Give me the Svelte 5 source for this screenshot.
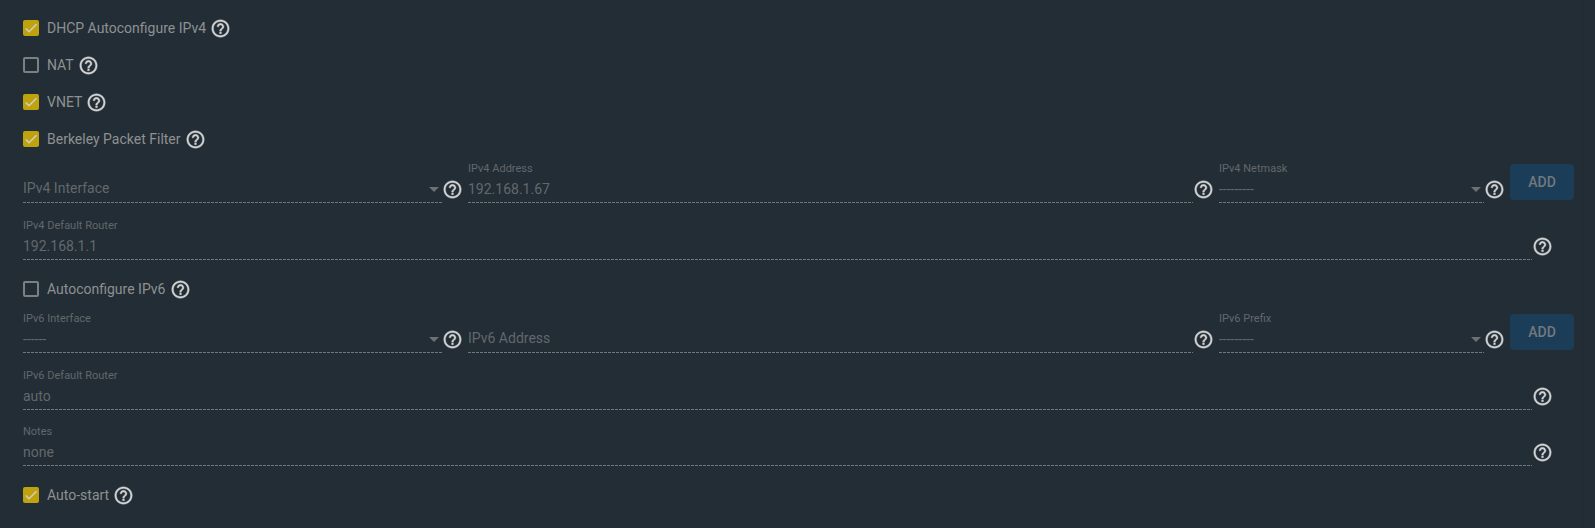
<script>
  let dhcp = $state(true);
  let nat = $state(false);
  let vnet = $state(true);
  let bpf = $state(true);
  let autoIpv6 = $state(false);
  let autoStart = $state(true);

  const interfaces = [
    {
      version: 'IPv4',
      ifaceEmpty: true,
      iface: '',
      address: '192.168.1.67',
      maskLabel: 'IPv4 Netmask',
      mask: '---------',
    },
    {
      version: 'IPv6',
      ifaceEmpty: false,
      iface: '------',
      address: '',
      maskLabel: 'IPv6 Prefix',
      mask: '---------',
    },
  ];
</script>

{#snippet help(topic)}
  <button type="button" class="help" aria-label="Help: {topic}">
    <svg viewBox="0 0 24 24" aria-hidden="true">
      <path d="M11 18h2v-2h-2v2zm1-16C6.48 2 2 6.48 2 12s4.48 10 10 10 10-4.48 10-10S17.52 2 12 2zm0 18c-4.41 0-8-3.59-8-8s3.59-8 8-8 8 3.59 8 8-3.59 8-8 8zm0-14c-2.21 0-4 1.79-4 4h2c0-1.1.9-2 2-2s2 .9 2 2c0 2-3 1.75-3 5h2c0-2.25 3-2.5 3-5 0-2.21-1.79-4-4-4z" />
    </svg>
  </button>
{/snippet}

{#snippet textField(id, label, value)}
  <div class="field-wrap">
    <div class="field" class:empty={!value}>
      <label for={id}>{label}</label>
      <input {id} type="text" {value} disabled />
    </div>
    {@render help(label)}
  </div>
{/snippet}

{#snippet selectField(id, label, value, empty)}
  <div class="field-wrap">
    <div class="field select" class:empty>
      <label for={id}>{label}</label>
      <select {id} disabled>
        <option>{value}</option>
      </select>
    </div>
    {@render help(label)}
  </div>
{/snippet}

{#snippet addressRow(row)}
  <div class="address-row">
    {@render selectField(row.version + '-interface', row.version + ' Interface', row.iface, row.ifaceEmpty)}
    {@render textField(row.version + '-address', row.version + ' Address', row.address)}
    {@render selectField(row.version + '-mask', row.maskLabel, row.mask, false)}
    <button type="button" class="add" disabled>ADD</button>
  </div>
{/snippet}

<form>
  <div class="fields">
    <div class="check">
      <label><input type="checkbox" bind:checked={dhcp} />DHCP Autoconfigure IPv4</label>
      {@render help('DHCP Autoconfigure IPv4')}
    </div>
    <div class="check">
      <label><input type="checkbox" bind:checked={nat} />NAT</label>
      {@render help('NAT')}
    </div>
    <div class="check">
      <label><input type="checkbox" bind:checked={vnet} />VNET</label>
      {@render help('VNET')}
    </div>
    <div class="check">
      <label><input type="checkbox" bind:checked={bpf} />Berkeley Packet Filter</label>
      {@render help('Berkeley Packet Filter')}
    </div>

    {@render addressRow(interfaces[0])}
    <div class="single">{@render textField('router4', 'IPv4 Default Router', '192.168.1.1')}</div>

    <div class="check">
      <label><input type="checkbox" bind:checked={autoIpv6} />Autoconfigure IPv6</label>
      {@render help('Autoconfigure IPv6')}
    </div>

    {@render addressRow(interfaces[1])}
    <div class="single">{@render textField('router6', 'IPv6 Default Router', 'auto')}</div>
    <div class="single">{@render textField('notes', 'Notes', 'none')}</div>

    <div class="check">
      <label><input type="checkbox" bind:checked={autoStart} />Auto-start</label>
      {@render help('Auto-start')}
    </div>
  </div>
</form>

<style>
  :global(body) {
    margin: 0;
    background: #232d35;
  }

  form {
    margin-right: 12px;
    border-right: 1px solid #20292f;
    font-family: Roboto, sans-serif;
    font-size: 14px;
    color: #8e9192;
  }

  .fields {
    padding: 20px 8px 24px 23px;
  }

  /* Checkbox rows */
  .check {
    display: flex;
    align-items: center;
    gap: 4px;
    height: 16px;
  }

  .check + .check,
  .single + .check {
    margin-top: 21px;
  }

  .check label {
    display: flex;
    align-items: center;
    gap: 8px;
    line-height: 16px;
  }

  .check input {
    appearance: none;
    box-sizing: border-box;
    width: 16px;
    height: 16px;
    margin: 0;
    border: 2px solid #7c8081;
    border-radius: 2px;
  }

  .check input:checked {
    border: none;
    background: #bea30f url("data:image/svg+xml,%3Csvg xmlns='http://www.w3.org/2000/svg' viewBox='0 0 24 24'%3E%3Cpath d='M4.1 12.7 9 17.6 20.3 6.3' fill='none' stroke='%23d4cfb8' stroke-width='2.4'/%3E%3C/svg%3E") center / 16px no-repeat;
  }

  .help {
    flex: none;
    width: 21px;
    height: 21px;
    padding: 0;
    border: none;
    background: none;
    color: #d2d3d3;
  }

  .help svg {
    display: block;
    fill: currentColor;
    stroke: currentColor;
    stroke-width: 0.4;
  }

  /* Form fields */
  .address-row {
    display: grid;
    grid-template-columns: 445fr 751fr 291fr 64px;
    margin-bottom: 1px;
  }

  .address-row .field-wrap {
    padding-right: 5px;
  }

  .single {
    padding-right: 21px;
  }

  .field-wrap {
    display: flex;
    align-items: flex-end;
    height: 56px;
    min-width: 0;
  }

  .field-wrap .help {
    margin-bottom: 3px;
  }

  .field {
    flex: 1;
    display: grid;
    grid-template-rows: 14px 24px;
    row-gap: 1px;
    min-width: 0;
    padding-bottom: 2px;
    color: #62686c;
    background: linear-gradient(to right, #70767a 75%, transparent 0) 0 100% / 4px 1px repeat-x;
  }

  .field label {
    font-size: 11px;
    line-height: 14px;
  }

  .field input,
  .field select {
    appearance: none;
    width: 100%;
    height: 24px;
    padding: 0;
    border: none;
    border-radius: 0;
    background: none;
    color: inherit;
    opacity: 1;
    font: inherit;
    line-height: 24px;
  }

  /* The label takes the place of the missing value */
  .field.empty label {
    grid-area: 2 / 1;
    font-size: 14px;
    line-height: 22px;
  }

  .field.empty input,
  .field.empty select {
    grid-area: 2 / 1;
  }

  .select {
    position: relative;
  }

  .select::after {
    content: '';
    position: absolute;
    right: 3px;
    bottom: 11px;
    border: 5px solid transparent;
    border-top-color: #6b7175;
    border-bottom: none;
  }

  .add {
    height: 36px;
    margin-top: 17px;
    padding: 0;
    border: none;
    border-radius: 4px;
    background: #1b3d57;
    color: #72797e;
    font: 500 14px/36px Roboto, sans-serif;
  }
</style>
